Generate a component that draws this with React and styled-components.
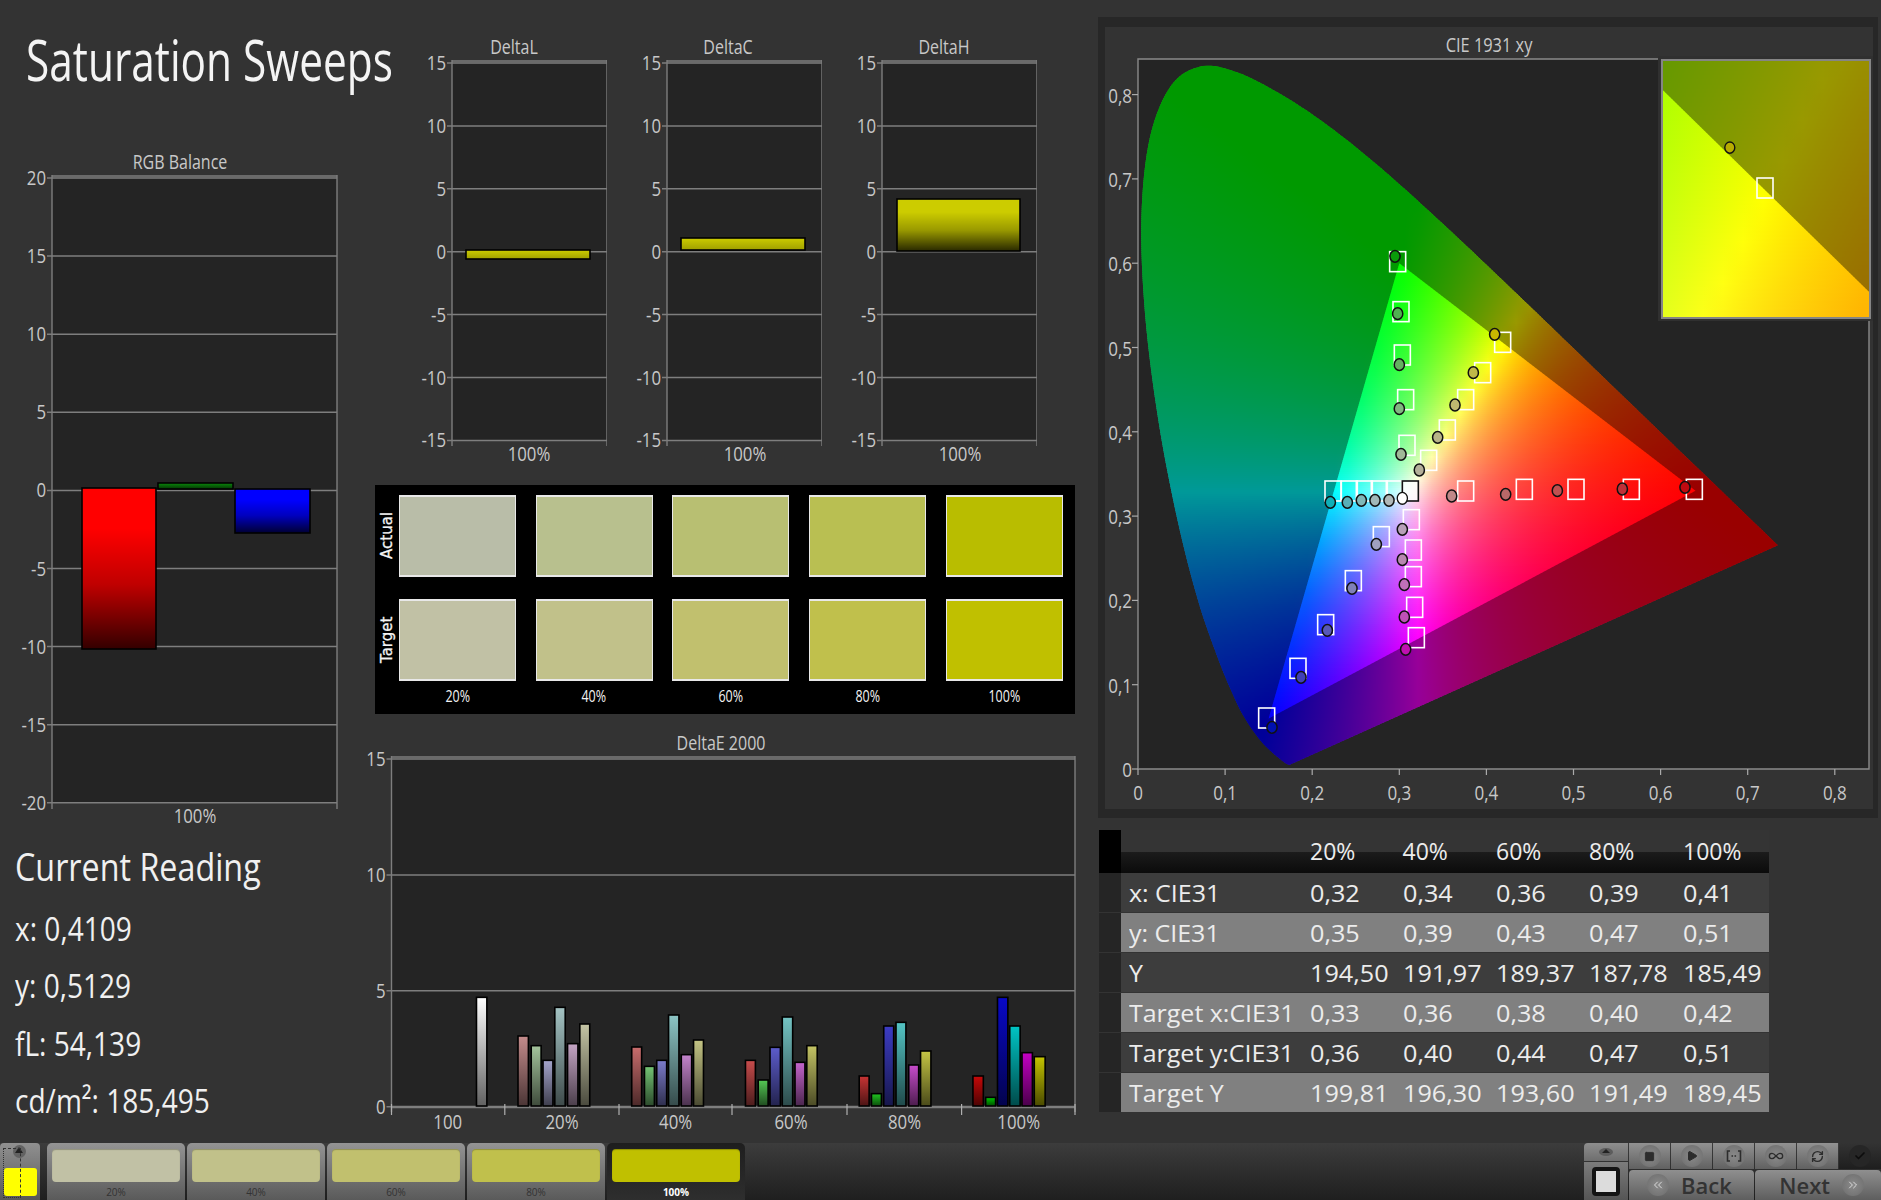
import React, { useMemo } from 'react';
import styled, { createGlobalStyle } from 'styled-components';
import { Check, ChevronsLeft, ChevronsRight, Infinity as InfinityIcon, Play, RefreshCw, Square } from 'lucide-react';

const FONT = '"Open Sans", "Noto Sans", "Liberation Sans", sans-serif';

const GlobalStyle = createGlobalStyle`
  html, body {
    margin: 0;
    background: #333333;
  }
  * {
    box-sizing: border-box;
  }
`;

const Page = styled.div`
  width: 1881px;
  height: 1200px;
  overflow: hidden;
  display: flex;
  flex-direction: column;
  background: #333333;
  font-family: ${FONT};
  color: #f0f0f0;
`;

const Main = styled.div`
  flex: 1;
  min-height: 0;
  display: grid;
  grid-template-columns: 375px 723px 783px;
`;

const Column = styled.div`
  display: flex;
  flex-direction: column;
  align-items: flex-start;
`;

const Squeezed = styled.span`
  display: inline-block;
  white-space: nowrap;
  transform-origin: left center;
  transform: scaleX(${p => p.$sx});
`;

const TitleBox = styled.h1`
  margin: 0;
  width: 100%;
  height: 140px;
  padding: 21px 0 0 26px;
  font-size: 56px;
  line-height: 76px;
  font-weight: 400;
  color: #f4f4f4;
`;

const Reading = styled.div`
  padding: 11px 0 0 15px;
  width: 100%;
`;

const ReadingTitle = styled.div`
  font-size: 38px;
  line-height: 50px;
  margin-bottom: 9px;
`;

const ReadingLine = styled.div`
  font-size: 33px;
  line-height: 57.4px;
`;

const ChartSvg = styled.svg`
  display: block;
  flex: none;

  text {
    font-family: ${FONT};
    fill: #c8c8c8;
  }
`;

const DeltaRow = styled.div`
  display: grid;
  grid-template-columns: repeat(3, 215px);
  padding: 30px 0 0 17px;
`;

const SwatchPanel = styled.div`
  margin-top: 15px;
  width: 700px;
  height: 229px;
  background: #000;
  display: flex;
  padding-top: 10px;
`;

const LabelColumn = styled.div`
  width: 24px;
  display: grid;
  grid-template-rows: 82px 82px;
  row-gap: 22px;
`;

const SwatchGrid = styled.div`
  display: grid;
  grid-template-columns: repeat(5, 117px);
  grid-template-rows: 82px 82px auto;
  column-gap: 19.7px;
  row-gap: 22px;
`;

const RowLabel = styled.div`
  writing-mode: vertical-rl;
  transform: rotate(180deg);
  text-align: center;
  font-family: "DejaVu Sans", sans-serif;
  font-size: 15px;
  color: #f4f4f4;
  justify-self: start;
  margin-left: 3px;
  -webkit-text-stroke: 0.3px #f4f4f4;
`;

const Swatch = styled.div`
  background: ${p => p.$color};
  border: 1px solid #e8e8e8;
  border-top-width: 2px;
  border-bottom-width: 2px;
`;

const SwatchCaption = styled.div`
  margin-top: -18px;
  text-align: center;
  font-size: 16px;
  line-height: 22px;
  color: #f4f4f4;
`;

const Narrow = styled.span`
  display: inline-block;
  transform: scaleX(0.78);
`;

const DeltaEWrap = styled.div`
  margin: 16px 0 0 -20px;
`;

const CiePanel = styled.div`
  margin-top: 17px;
  width: 780px;
  height: 801px;
  border-style: solid;
  border-color: #272727;
  border-width: 10px 5px 9px 7px;
  background: #333333;
`;

const Table = styled.div`
  margin: 12px 0 0 1px;
  width: 670px;
  font-size: 24px;
`;

const Row = styled.div`
  display: grid;
  grid-template-columns: 22px 189px 92.5px 93.5px 93px 94px 86px;
  height: ${p => (p.$head ? 43 : 39)}px;
  margin-bottom: ${p => (p.$head ? 0 : 1)}px;
  line-height: 37px;
  align-items: center;
  background: ${p => (p.$head ? 'linear-gradient(#343434 50%, #1c1c1c 50%, #0b0b0b)' : p.$even ? '#808080' : '#3d3d3d')};
`;

const Marker = styled.div`
  align-self: stretch;
  background: ${p => (p.$head ? '#000' : '#252525')};
`;

const Cell = styled.div`
  white-space: nowrap;
  margin-left: ${p => (p.$label ? 8 : 0)}px;
  color: #ececec;
  font-size: ${p => (p.$head ? 23 : 24)}px;
  transform-origin: left center;
  transform: scaleX(${p => (p.$head ? 1 : p.$label ? 1.04 : 1.05)});
`;

const BottomBar = styled.div`
  height: 57px;
  flex: none;
  display: flex;
  background: linear-gradient(#3c3c3c, #1f1f1f);
`;

const ChipButton = styled.div`
  position: relative;
  width: 40px;
  margin-right: 7px;
  border-radius: 4px 4px 0 0;
  background: linear-gradient(#909090, #585858);
`;

const ChipArrow = styled.div`
  position: absolute;
  left: 13px;
  top: 2px;
  width: 13px;
  height: 13px;
  border-radius: 50%;
  background: #626262;

  &::after {
    content: '';
    position: absolute;
    left: 2px;
    top: 2px;
    border: 4px solid transparent;
    border-top-width: 0;
    border-bottom: 6px solid #222;
  }
`;

const ChipColor = styled.div`
  position: absolute;
  left: 4px;
  top: 25px;
  width: 33px;
  height: 28px;
  border-radius: 3px;
  background: #ffff00;
`;

const ChipGuide = styled.div`
  position: absolute;
  left: 3px;
  top: 5px;
  width: 18px;
  height: 50px;
  border: 1px dashed #333;
  border-left-style: dotted;
  border-bottom-style: dotted;
`;

const Tabs = styled.div`
  display: flex;
  gap: 2px;
`;

const Tab = styled.div`
  width: 138px;
  padding: 6px 5px 0;
  border-radius: 5px 5px 0 0;
  background: ${p => (p.$active ? 'linear-gradient(#1e1e1e, #2e2e2e)' : 'linear-gradient(#949494, #5a5a5a)')};
`;

const TabColor = styled.div`
  height: 33px;
  border-radius: 4px;
  background: ${p => p.$color};
  box-shadow: inset 0 1px 1px rgba(0, 0, 0, 0.25);
`;

const TabLabel = styled.div`
  text-align: center;
  margin-top: 3px;
  font-size: 10px;
  line-height: 14px;
  font-weight: ${p => (p.$active ? 700 : 400)};
  color: ${p => (p.$active ? '#fff' : '#333')};
`;

const Spacer = styled.div`
  flex: 1;
`;

const Controls = styled.div`
  width: 297px;
  display: flex;
  gap: 1px;
`;

const SideColumn = styled.div`
  width: 44px;
  display: flex;
  flex-direction: column;
  gap: 1px;
`;

const SideTop = styled.div`
  height: 18px;
  display: flex;
  align-items: center;
  justify-content: center;
  border-radius: 4px 0 0 0;
  background: linear-gradient(#8e8e8e, #6e6e6e);
`;

const SideTopIcon = styled.div`
  width: 14px;
  height: 8px;
  border-radius: 50%;
  background: #5c5c5c;
  position: relative;

  &::after {
    content: '';
    position: absolute;
    left: 3px;
    top: 1px;
    border: 4px solid transparent;
    border-top-width: 0;
    border-bottom: 4px solid #222;
  }
`;

const SideBottom = styled.div`
  flex: 1;
  display: flex;
  align-items: center;
  justify-content: center;
  background: linear-gradient(#7c7c7c, #555);
`;

const SideSquare = styled.div`
  width: 28px;
  height: 29px;
  border: 4px solid #141414;
  border-radius: 4px;
  background: #dcdcdc;
`;

const ToolArea = styled.div`
  flex: 1;
  display: flex;
  flex-direction: column;
  gap: 1px;
`;

const ToolRow = styled.div`
  display: flex;
  gap: 1px;
  height: 28px;
`;

const ToolButton = styled.div`
  width: 41px;
  flex: ${p => (p.$last ? 1 : 'none')};
  display: flex;
  align-items: center;
  justify-content: center;
  background: ${p => (p.$dark ? 'linear-gradient(#333, #1e1e1e)' : 'linear-gradient(#929292, #616161)')};
`;

const Knob = styled.div`
  width: 22px;
  height: 22px;
  border-radius: 50%;
  display: flex;
  align-items: center;
  justify-content: center;
  color: #2c2c2c;
  background: ${p => (p.$dark ? '#262626' : 'radial-gradient(#8a8a8a, #6c6c6c)')};
`;

const NavRow = styled.div`
  display: grid;
  grid-template-columns: 125px 1fr;
  gap: 1px;
  flex: 1;
`;

const NavButton = styled.div`
  display: flex;
  align-items: center;
  justify-content: ${p => (p.$next ? 'flex-end' : 'flex-start')};
  gap: 12px;
  padding: ${p => (p.$next ? '0 17px 0 0' : '0 0 0 18px')};
  border-radius: 4px 4px 0 0;
  background: linear-gradient(#8f8f8f, #5e5e5e);
  color: #333;
  font-size: 22px;
  font-weight: 600;
`;

const ordinate = (y0, pitch, values) => values.map((v, i) => ({ label: v, y: y0 + pitch * i }));

const SvgText = ({ x, y, size = 20, sx = 0.84, anchor = 'middle', children }) => (
  <text transform={`translate(${x} ${y}) scale(${sx} 1)`} textAnchor={anchor} fontSize={size}>
    {children}
  </text>
);

const FadeDefs = () => (
  <defs>
    <linearGradient id="fade" x1="0" x2="0" y1="0" y2="1">
      <stop offset="0" stopColor="#000" stopOpacity="0" />
      <stop offset="1" stopColor="#000" stopOpacity="0.62" />
    </linearGradient>
    <linearGradient id="fadeSoft" x1="0" x2="0" y1="0" y2="1">
      <stop offset="0" stopColor="#000" stopOpacity="0" />
      <stop offset="1" stopColor="#000" stopOpacity="0.22" />
    </linearGradient>
    <linearGradient id="fadeDeep" x1="0" x2="0" y1="0" y2="1">
      <stop offset="0.25" stopColor="#000" stopOpacity="0" />
      <stop offset="0.6" stopColor="#000" stopOpacity="0.25" />
      <stop offset="1" stopColor="#000" stopOpacity="0.8" />
    </linearGradient>
  </defs>
);

const Bar = ({ x0, x1, y0, y1, color, fade = 'fade' }) => (
  <g>
    <rect x={x0} y={y0} width={x1 - x0} height={y1 - y0} fill={color} stroke="#000" strokeWidth="1.6" />
    <rect x={x0} y={y0} width={x1 - x0} height={y1 - y0} fill={`url(#${fade})`} />
  </g>
);

const PlotFrame = ({ left, right, top, bottom, rows }) => (
  <g>
    <rect x={left} y={top} width={right - left} height={bottom - top} fill="#242424" />
    {rows.map(r => (
      <g key={r.label}>
        <line x1={left - 5} x2={right} y1={r.y} y2={r.y} stroke="#7e7e7e" strokeWidth="1.5" />
        <SvgText x={left - 6} y={r.y + 7} anchor="end">{r.label}</SvgText>
      </g>
    ))}
    <line x1={left} x2={right} y1={top - 2} y2={top - 2} stroke="#7e7e7e" strokeWidth="1.5" />
    <line x1={left} x2={left} y1={top - 3} y2={bottom + 6} stroke="#7e7e7e" strokeWidth="1.4" />
    <line x1={right} x2={right} y1={top - 3} y2={bottom + 6} stroke="#7e7e7e" strokeWidth="1.4" />
  </g>
);

const RgbChart = () => (
  <ChartSvg width="375" height="690" viewBox="0 140 375 690">
    <FadeDefs />
    <SvgText x={180} y={169} sx={0.8}>RGB Balance</SvgText>
    <PlotFrame left={52} right={337} top={178} bottom={803}
      rows={ordinate(178, 78.1, [20, 15, 10, 5, 0, -5, -10, -15, -20])} />
    <Bar x0={82} x1={156} y0={488} y1={649} color="#ff0000" fade="fadeDeep" />
    <Bar x0={158} x1={233} y0={483} y1={489} color="#0a8a0a" />
    <Bar x0={235} x1={310} y0={489} y1={533} color="#0000ff" fade="fadeDeep" />
    <SvgText x={195} y={823}>100%</SvgText>
  </ChartSvg>
);

const DeltaChart = ({ title, plot, titleX, labelX, bar, fade = 'fadeSoft' }) => (
  <ChartSvg width="215" height="440" viewBox={`${plot - 60} 30 215 440`}>
    <FadeDefs />
    <SvgText x={titleX} y={54} sx={0.8}>{title}</SvgText>
    <PlotFrame left={plot} right={plot + 155} top={63} bottom={440}
      rows={ordinate(63, 62.9, [15, 10, 5, 0, -5, -10, -15])} />
    <Bar x0={plot + bar[0]} x1={plot + bar[1]} y0={bar[2]} y1={bar[3]} color="#cccc00" fade={fade} />
    <SvgText x={labelX} y={461}>100%</SvgText>
  </ChartSvg>
);

// bar geometry read off the chart in crop pixels, tops measured from the same origin as the base
const DELTA_E_BASE = 468;
const deltaEBars = [
  [268, 290, 142, '#ffffff'],
  [356, 378, 258, '#c48c8c'], [384, 405, 287, '#a4c49c'], [409, 430, 331, '#a4a4cc'], [434, 456, 172, '#a4c4c4'], [461, 483, 281, '#c4a4c4'], [487, 508, 222, '#c4c4a4'],
  [597, 618, 291, '#c86c6c'], [624, 645, 349, '#74c474'], [650, 671, 331, '#7c7ccc'], [675, 697, 195, '#8cc4c4'], [702, 724, 314, '#c484cc'], [728, 749, 270, '#c4c484'],
  [838, 859, 331, '#c84c4c'], [865, 886, 390, '#54c854'], [890, 912, 292, '#5c5ccc'], [916, 938, 201, '#74c4c4'], [943, 964, 337, '#c464cc'], [968, 990, 287, '#c4c464'],
  [1079, 1100, 378, '#c83434'], [1105, 1126, 431, '#20c820'], [1131, 1152, 228, '#3c3cc4'], [1157, 1178, 217, '#54c4c4'], [1184, 1205, 345, '#c84ccc'], [1209, 1231, 303, '#c4c444'],
  [1320, 1342, 378, '#c80808'], [1347, 1368, 442, '#00c800'], [1372, 1394, 142, '#0808c8'], [1398, 1420, 228, '#00c4c4'], [1424, 1446, 308, '#c400c4'], [1450, 1473, 320, '#c4c400'],
];
const deltaETicks = [391.5, 504.8, 619, 732, 847, 961.6, 1075];
const deltaELabels = [['100', 447.7], ['20%', 562], ['40%', 675.6], ['60%', 791], ['80%', 904.5], ['100%', 1018.7]];

const DeltaEChart = () => (
  <ChartSvg width="743" height="405" viewBox="355 730 743 405">
    <FadeDefs />
    <SvgText x={721} y={750} sx={0.8}>DeltaE 2000</SvgText>
    <PlotFrame left={391.5} right={1075} top={759} bottom={1106}
      rows={ordinate(759, 115.9, [15, 10, 5, 0])} />
    <line x1={391.5} x2={1075} y1={1107} y2={1107} stroke="#7e7e7e" strokeWidth="2.6" />
    {deltaETicks.map(x => (
      <line key={x} x1={x} x2={x} y1={1104} y2={1115} stroke="#b0b0b0" strokeWidth="1.2" />
    ))}
    {deltaEBars.map(([a, b, top, color]) => (
      <Bar key={a} x0={350 + a / 2.119} x1={350 + b / 2.119} y0={950 + top / 3} y1={950 + DELTA_E_BASE / 3} color={color} />
    ))}
    {deltaELabels.map(([t, x]) => (
      <SvgText key={t} x={x} y={1129}>{t}</SvgText>
    ))}
  </ChartSvg>
);

// spectral locus of the CIE 1931 observer, closed by the purple line
const LOCUS = [
  [0.1741, 0.005], [0.1666, 0.0089], [0.144, 0.0297], [0.1241, 0.0578], [0.1096, 0.0868], [0.0913, 0.1327],
  [0.0687, 0.2007], [0.0454, 0.295], [0.0235, 0.4127], [0.0082, 0.5384], [0.0039, 0.6548], [0.0139, 0.7502],
  [0.0389, 0.812], [0.0743, 0.8338], [0.1142, 0.8262], [0.1547, 0.8059], [0.1929, 0.7816], [0.2296, 0.7543],
  [0.2658, 0.7243], [0.3016, 0.6923], [0.3373, 0.6589], [0.3731, 0.6245], [0.4087, 0.5896], [0.4441, 0.5547],
  [0.4788, 0.5202], [0.5125, 0.4866], [0.5448, 0.4544], [0.5752, 0.4242], [0.6029, 0.3965], [0.627, 0.3725],
  [0.6658, 0.334], [0.6915, 0.3083], [0.7347, 0.2653],
];
const GAMUT = [[0.64, 0.33], [0.3, 0.6], [0.15, 0.06]];

// catmull-rom through the locus so the horseshoe has no corners
const smoothLocus = () => {
  const out = [];
  const at = i => LOCUS[Math.max(0, Math.min(LOCUS.length - 1, i))];
  for (let i = 0; i < LOCUS.length - 1; i++) {
    const [p0, p1, p2, p3] = [at(i - 1), at(i), at(i + 1), at(i + 2)];
    for (let k = 0; k < 8; k++) {
      const t = k / 8;
      const f = c => 0.5 * (2 * p1[c] + (p2[c] - p0[c]) * t + (2 * p0[c] - 5 * p1[c] + 4 * p2[c] - p3[c]) * t * t + (3 * p1[c] - p0[c] - 3 * p2[c] + p3[c]) * t * t * t);
      out.push([f(0), f(1)]);
    }
  }
  out.push(LOCUS[LOCUS.length - 1]);
  return out;
};

const plotX = x => 1138 + 871 * x;
const plotY = y => 769 - 843 * y;
const dataX = px => (px - 1138) / 871;
const dataY = py => (769 - py) / 843;

// zoomed inset around the current target
const insetX = ix => 1502.7 + (ix - 1765) / 4.4;
const insetY = iy => 342.3 + (iy - 188) / 5.6;
const fromInsetX = mx => 1765 + (mx - 1502.7) * 4.4;
const fromInsetY = my => 188 + (my - 342.3) * 5.6;

const chromaColor = (x, y) => {
  const z = 1 - x - y;
  const r = Math.max(3.2406 * x - 1.5372 * y - 0.4986 * z, 0);
  const g = Math.max(-0.9689 * x + 1.8758 * y + 0.0415 * z, 0);
  const b = Math.max(0.0557 * x - 0.204 * y + 1.057 * z, 0);
  const m = Math.max(r, g, b) || 1;
  return `rgb(${Math.round((r / m) * 255)},${Math.round((g / m) * 255)},${Math.round((b / m) * 255)})`;
};

const ChromaRows = ({ id, left, right, top, bottom, rowH, stepX, toX, toY }) => {
  const rows = useMemo(() => {
    const out = [];
    for (let py = top; py < bottom; py += rowH) {
      const stops = [];
      for (let px = left; px <= right; px += stepX) {
        stops.push({
          offset: (px - left) / (right - left),
          color: chromaColor(dataX(toX(px)), dataY(toY(py + rowH / 2))),
        });
      }
      out.push({ py, stops });
    }
    return out;
  }, [left, right, top, bottom, rowH, stepX, toX, toY]);

  return (
    <defs>
      {rows.map(r => (
        <linearGradient key={r.py} id={`${id}-${r.py}`} gradientUnits="userSpaceOnUse" x1={left} x2={right} y1="0" y2="0">
          {r.stops.map(s => (
            <stop key={s.offset} offset={s.offset} stopColor={s.color} />
          ))}
        </linearGradient>
      ))}
      <g id={id}>
        {rows.map(r => (
          <rect key={r.py} x={left} y={r.py} width={right - left} height={rowH + 0.4} fill={`url(#${id}-${r.py})`} />
        ))}
      </g>
    </defs>
  );
};

const identity = v => v;

const targets = [
  [533, 95], [543, 245], [547, 375], [557, 509], [561, 646],
  [848, 337], [788, 428], [737, 509], [682, 600], [626, 691],
  [1423, 778], [1234, 778], [1068, 778], [913, 778], [737, 783],
  [339, 783], [388, 783], [433, 783], [478, 783], [523, 783],
  [589, 1223], [584, 1132], [580, 1040], [580, 960], [574, 869],
  [234, 1315], [317, 1184], [400, 1052], [484, 920], [140, 1464],
];

const actuals = [
  [525, 79, '#0a9a0a'], [533, 251, '#50b050'], [538, 404, '#64b060'], [538, 536, '#80b880'], [543, 673, '#a0b898'],
  [824, 313, '#c8b800'], [760, 428, '#c0b848'], [705, 525, '#bfb870'], [653, 622, '#b8b488'], [598, 720, '#b4b09a'],
  [1395, 772, '#c00a10'], [1207, 777, '#c03038'], [1012, 782, '#c05050'], [857, 793, '#b86868'], [695, 798, '#c08888'],
  [331, 817, '#10b0b8'], [382, 817, '#58b0b8'], [424, 811, '#80b8b8'], [465, 811, '#a0b8b8'], [507, 811, '#b0b8b8'],
  [557, 1258, '#c010b0'], [553, 1161, '#c050b8'], [553, 1064, '#c070b8'], [547, 989, '#b888b0'], [547, 898, '#b8a0b8'],
  [243, 1342, '#4040b8'], [322, 1201, '#5858b8'], [396, 1075, '#8080b8'], [469, 943, '#a0a0c0'], [156, 1492, '#0010b0'],
];

const cropX = px => 1220 + px / 3;
const cropY = py => 230 + py / 3;

const CieChart = () => {
  const locusPts = smoothLocus().map(([x, y]) => `${plotX(x)},${plotY(y)}`).join(' ');
  const gamutPts = GAMUT.map(([x, y]) => `${plotX(x)},${plotY(y)}`).join(' ');
  const insetPts = GAMUT.map(([x, y]) => `${fromInsetX(plotX(x))},${fromInsetY(plotY(y))}`).join(' ');

  return (
    <ChartSvg width="768" height="782" viewBox="1105 27 768 782">
      <ChromaRows id="field" left={1138} right={1790} top={60} bottom={770} rowH={2} stepX={14} toX={identity} toY={identity} />
      <ChromaRows id="zoomField" left={1663} right={1869} top={61} bottom={317} rowH={2} stepX={20} toX={insetX} toY={insetY} />
      <defs>
        <clipPath id="locusClip"><polygon points={locusPts} /></clipPath>
        <clipPath id="gamutClip"><polygon points={gamutPts} /></clipPath>
        <clipPath id="insetGamutClip"><polygon points={insetPts} /></clipPath>
      </defs>

      <SvgText x={1489} y={52} sx={0.82}>CIE 1931 xy</SvgText>
      <rect x={1138} y={59} width={731} height={710} fill="#242424" />
      <polyline points="1138,769 1138,59 1658,59" fill="none" stroke="#8a8a8a" strokeWidth="1.4" />
      <polyline points="1138,769 1869,769 1869,318" fill="none" stroke="#8a8a8a" strokeWidth="1.4" />

      <g clipPath="url(#locusClip)">
        <use href="#field" />
        <rect x={1138} y={59} width={731} height={710} fill="#000" opacity="0.4" />
      </g>
      <g clipPath="url(#gamutClip)">
        <use href="#field" />
      </g>

      {[0, 1, 2, 3, 4, 5, 6, 7, 8].map(i => (
        <g key={i}>
          <line x1={plotX(i / 10)} x2={plotX(i / 10)} y1={769} y2={775} stroke="#aaa" strokeWidth="1.2" />
          <line x1={1132} x2={1138} y1={plotY(i / 10)} y2={plotY(i / 10)} stroke="#aaa" strokeWidth="1.2" />
          <SvgText x={plotX(i / 10)} y={800} sx={0.85}>{i ? `0,${i}` : '0'}</SvgText>
          <SvgText x={1132} y={plotY(i / 10) + 8} sx={0.85} anchor="end">{i ? `0,${i}` : '0'}</SvgText>
        </g>
      ))}

      {targets.map(([x, y]) => (
        <rect key={`${x}-${y}`} x={cropX(x) - 8} y={cropY(y) - 10} width={16} height={20} fill="none" stroke="#fff" strokeWidth="1.6" />
      ))}
      <rect x={cropX(571) - 8} y={cropY(783) - 10} width={16} height={20} fill="rgba(255,255,255,0.75)" stroke="#111" strokeWidth="1.6" />
      {actuals.map(([x, y, c]) => (
        <ellipse key={`${x}-${y}`} cx={cropX(x)} cy={cropY(y)} rx={5.1} ry={5.9} fill={c} stroke="#111" strokeWidth="1.5" />
      ))}
      <ellipse cx={cropX(547)} cy={cropY(805)} rx={5.1} ry={5.9} fill="#fff" stroke="#111" strokeWidth="1.3" />

      <rect x={1658} y={56} width={215} height={265} fill="#303030" />
      <rect x={1663} y={61} width={206} height={256} fill="#000" />
      <use href="#zoomField" opacity="0.6" />
      <g clipPath="url(#insetGamutClip)">
        <use href="#zoomField" />
      </g>
      <rect x={1662} y={60} width={208} height={258} fill="none" stroke="#858585" strokeWidth="2" />
      <ellipse cx={1729.8} cy={147.6} rx={5} ry={5.6} fill="#b8ac00" stroke="#111" strokeWidth="1.4" />
      <rect x={1757} y={178} width={16} height={20} fill="none" stroke="#fff" strokeWidth="1.6" />
    </ChartSvg>
  );
};

const percents = ['20%', '40%', '60%', '80%', '100%'];
const actualColors = ['#b9bda8', '#b8c08e', '#b8bf72', '#b9bf52', '#b9bd00'];
const targetColors = ['#c1c1a5', '#c1c18a', '#c1c06e', '#c0c04c', '#c0c000'];

const tableRows = [
  ['x: CIE31', '0,32', '0,34', '0,36', '0,39', '0,41'],
  ['y: CIE31', '0,35', '0,39', '0,43', '0,47', '0,51'],
  ['Y', '194,50', '191,97', '189,37', '187,78', '185,49'],
  ['Target x:CIE31', '0,33', '0,36', '0,38', '0,40', '0,42'],
  ['Target y:CIE31', '0,36', '0,40', '0,44', '0,47', '0,51'],
  ['Target Y', '199,81', '196,30', '193,60', '191,49', '189,45'],
];

const LoopIcon = () => (
  <svg width="16" height="14" viewBox="0 0 16 14" fill="none" stroke="#2c2c2c" strokeWidth="1.6">
    <path d="M4 2H1.5v10H4M12 2h2.5v10H12" />
    <path d="M5.5 7h5" strokeDasharray="1.6 1.4" />
  </svg>
);

const BarControls = () => (
  <Controls>
    <SideColumn>
      <SideTop><SideTopIcon /></SideTop>
      <SideBottom><SideSquare /></SideBottom>
    </SideColumn>
    <ToolArea>
      <ToolRow>
        <ToolButton><Knob><Square size={11} fill="#2c2c2c" /></Knob></ToolButton>
        <ToolButton><Knob><Play size={12} fill="#2c2c2c" /></Knob></ToolButton>
        <ToolButton><Knob><LoopIcon /></Knob></ToolButton>
        <ToolButton><Knob><InfinityIcon size={16} strokeWidth={2} /></Knob></ToolButton>
        <ToolButton><Knob><RefreshCw size={13} strokeWidth={2.6} /></Knob></ToolButton>
        <ToolButton $dark $last><Knob $dark><Check size={12} strokeWidth={3.4} color="#0c0c0c" /></Knob></ToolButton>
      </ToolRow>
      <NavRow>
        <NavButton>
          <Knob><ChevronsLeft size={14} strokeWidth={1.4} color="#eee" /></Knob>
          <span>Back</span>
        </NavButton>
        <NavButton $next>
          <span>Next</span>
          <Knob><ChevronsRight size={14} strokeWidth={1.4} color="#eee" /></Knob>
        </NavButton>
      </NavRow>
    </ToolArea>
  </Controls>
);

export default function App() {
  return (
    <Page>
      <GlobalStyle />
      <Main>
        <Column>
          <TitleBox><Squeezed $sx={0.757}>Saturation Sweeps</Squeezed></TitleBox>
          <RgbChart />
          <Reading>
            <ReadingTitle><Squeezed $sx={0.85}>Current Reading</Squeezed></ReadingTitle>
            <ReadingLine><Squeezed $sx={0.85}>x: 0,4109</Squeezed></ReadingLine>
            <ReadingLine><Squeezed $sx={0.85}>y: 0,5129</Squeezed></ReadingLine>
            <ReadingLine><Squeezed $sx={0.85}>fL: 54,139</Squeezed></ReadingLine>
            <ReadingLine><Squeezed $sx={0.85}>cd/m²: 185,495</Squeezed></ReadingLine>
          </Reading>
        </Column>

        <Column>
          <DeltaRow>
            <DeltaChart title="DeltaL" plot={452} titleX={514} labelX={529} bar={[14, 138, 250, 259]} />
            <DeltaChart title="DeltaC" plot={667} titleX={728} labelX={745} bar={[14, 138, 238, 250]} />
            <DeltaChart title="DeltaH" plot={882} titleX={944} labelX={960} bar={[15, 138, 199, 251]} fade="fadeDeep" />
          </DeltaRow>
          <SwatchPanel>
            <LabelColumn>
              <RowLabel>Actual</RowLabel>
              <RowLabel>Target</RowLabel>
            </LabelColumn>
            <SwatchGrid>
              {actualColors.map(c => <Swatch key={c} $color={c} />)}
              {targetColors.map(c => <Swatch key={c} $color={c} />)}
              {percents.map(p => (
                <SwatchCaption key={p}><Narrow>{p}</Narrow></SwatchCaption>
              ))}
            </SwatchGrid>
          </SwatchPanel>
          <DeltaEWrap><DeltaEChart /></DeltaEWrap>
        </Column>

        <Column>
          <CiePanel><CieChart /></CiePanel>
          <Table>
            <Row $head>
              <Marker $head />
              <Cell $label $head />
              {percents.map(p => <Cell key={p} $head>{p}</Cell>)}
            </Row>
            {tableRows.map((row, i) => (
              <Row key={row[0]} $even={i % 2 === 1}>
                <Marker />
                <Cell $label>{row[0]}</Cell>
                {row.slice(1).map((v, j) => <Cell key={j}>{v}</Cell>)}
              </Row>
            ))}
          </Table>
        </Column>
      </Main>

      <BottomBar>
        <ChipButton>
          <ChipArrow />
          <ChipColor />
          <ChipGuide />
        </ChipButton>
        <Tabs>
          {percents.map((p, i) => (
            <Tab key={p} $active={i === 4}>
              <TabColor $color={targetColors[i]} />
              <TabLabel $active={i === 4}>{p}</TabLabel>
            </Tab>
          ))}
        </Tabs>
        <Spacer />
        <BarControls />
      </BottomBar>
    </Page>
  );
}
